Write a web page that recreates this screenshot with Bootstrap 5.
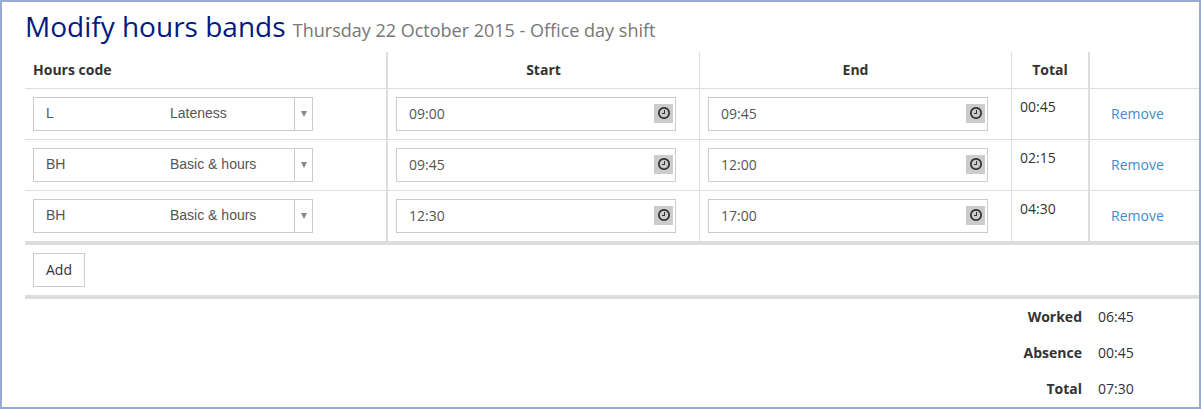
<!DOCTYPE html>
<html lang="en">
<head>
<meta charset="utf-8">
<meta name="viewport" content="width=device-width, initial-scale=1">
<title>Modify hours bands</title>
<link href="https://cdn.jsdelivr.net/npm/bootstrap@5.3.0/dist/css/bootstrap.min.css" rel="stylesheet">
<style>
  body { font-family: "Open Sans", sans-serif; font-size: 14px; line-height: 20px; color: #333; }
  .frame { border: 2px solid #9aa9cf; padding: 8px 0 0 23px; }
  h1 { font-size: 28px; line-height: 32px; font-weight: 400; color: #001a80; margin-bottom: 10px; }
  h1 small { font-size: 18px; line-height: 18px; color: #777; }
  .bands { border-collapse: separate; border-spacing: 0; table-layout: fixed; width: 100%; min-width: 1174px; }
  .bands th, .bands td { padding: 8px; vertical-align: top; border: 0 solid #ddd; }
  .bands thead > tr > *, .bands tbody > tr > * { border-bottom-width: 1px; }
  .bands .line { border-right-width: 1px; }
  .bands .line-thick { border-right-width: 2px; }
  .bands tbody > tr:last-child > *, .bands .add-row > * { border-bottom-width: 4px; }
  .col-code { width: 363px; }
  .col-time { width: 312px; }
  .col-total { width: 78px; }
  .field { width: 280px; }
  .field .form-control, .field .form-select {
    height: 34px; padding: 5px 12px 7px; font-size: 14px; line-height: 20px;
    border: 1px solid #ccc; border-radius: 0; color: #555; background: #fff;
  }
  .field .form-select { font-family: "Liberation Sans", sans-serif; padding: 5px 20px 7px 136px; }
  .code { left: 13px; top: 6px; font-family: "Liberation Sans", sans-serif; color: #555; pointer-events: none; }
  .arrow { right: 0; top: 0; width: 19px; height: 34px; border: 1px solid #ccc; pointer-events: none; }
  .clock { right: 3px; top: 7px; width: 19px; height: 19px; padding: 0 0 2px; border: 0; background: #ccc; color: #333; }
  .btn { --bs-btn-font-size: 14px; --bs-btn-line-height: 20px; --bs-btn-border-radius: 0; }
  .btn-plain { --bs-btn-color: #333; --bs-btn-border-color: #ccc; --bs-btn-hover-bg: #eee; }
  .btn-remove { --bs-btn-color: #428bca; --bs-btn-hover-color: #2a6496; }
</style>
</head>
<body>
<svg class="d-none" aria-hidden="true">
  <symbol id="clock" viewBox="0 128 1536 1536"><path fill="currentColor" d="M896 544v448q0 14-9 23t-23 9h-320q-14 0-23-9t-9-23v-64q0-14 9-23t23-9h224v-352q0-14 9-23t23-9h64q14 0 23 9t9 23zm416 352q0-148-73-273t-198-198-273-73-273 73-198 198-73 273 73 273 198 198 273 73 273-73 198-198 73-273zm224 0q0 209-103 385.5t-279.5 279.5-385.5 103-385.5-103-279.5-279.5-103-385.5 103-385.5 279.5-279.5 385.5-103 385.5 103 279.5 279.5 103 385.5z"/></symbol>
  <symbol id="down" viewBox="0 0 6 6"><path fill="#888" d="M0 0h6L3 6z"/></symbol>
</svg>
<main class="frame min-vh-100">
  <h1>Modify hours bands <small>Thursday 22 October 2015 - Office day shift</small></h1>
  <table class="bands">
    <colgroup><col class="col-code"><col class="col-time"><col class="col-time"><col class="col-total"><col></colgroup>
    <thead>
      <tr>
        <th scope="col" class="line-thick">Hours code</th>
        <th scope="col" class="line text-center">Start</th>
        <th scope="col" class="line text-center">End</th>
        <th scope="col" class="line-thick text-center">Total</th>
        <td></td>
      </tr>
    </thead>
    <tbody>
      <tr>
        <td class="line-thick"><div class="field position-relative">
          <select class="form-select" aria-label="Hours code, band 1"><option>Lateness</option><option>Basic &amp; hours</option></select>
          <span class="code position-absolute">L</span>
          <span class="arrow position-absolute d-flex align-items-center justify-content-center"><svg width="6" height="6"><use href="#down"/></svg></span>
        </div></td>
        <td class="line"><div class="field position-relative">
          <input type="text" class="form-control" value="09:00" aria-label="Start, band 1">
          <button type="button" class="clock position-absolute d-flex align-items-center justify-content-center" aria-label="Pick start time"><svg width="12" height="12"><use href="#clock"/></svg></button>
        </div></td>
        <td class="line"><div class="field position-relative">
          <input type="text" class="form-control" value="09:45" aria-label="End, band 1">
          <button type="button" class="clock position-absolute d-flex align-items-center justify-content-center" aria-label="Pick end time"><svg width="12" height="12"><use href="#clock"/></svg></button>
        </div></td>
        <td class="line-thick">00:45</td>
        <td><a href="#" class="btn btn-remove">Remove</a></td>
      </tr>
      <tr>
        <td class="line-thick"><div class="field position-relative">
          <select class="form-select" aria-label="Hours code, band 2"><option>Basic &amp; hours</option><option>Lateness</option></select>
          <span class="code position-absolute">BH</span>
          <span class="arrow position-absolute d-flex align-items-center justify-content-center"><svg width="6" height="6"><use href="#down"/></svg></span>
        </div></td>
        <td class="line"><div class="field position-relative">
          <input type="text" class="form-control" value="09:45" aria-label="Start, band 2">
          <button type="button" class="clock position-absolute d-flex align-items-center justify-content-center" aria-label="Pick start time"><svg width="12" height="12"><use href="#clock"/></svg></button>
        </div></td>
        <td class="line"><div class="field position-relative">
          <input type="text" class="form-control" value="12:00" aria-label="End, band 2">
          <button type="button" class="clock position-absolute d-flex align-items-center justify-content-center" aria-label="Pick end time"><svg width="12" height="12"><use href="#clock"/></svg></button>
        </div></td>
        <td class="line-thick">02:15</td>
        <td><a href="#" class="btn btn-remove">Remove</a></td>
      </tr>
      <tr>
        <td class="line-thick"><div class="field position-relative">
          <select class="form-select" aria-label="Hours code, band 3"><option>Basic &amp; hours</option><option>Lateness</option></select>
          <span class="code position-absolute">BH</span>
          <span class="arrow position-absolute d-flex align-items-center justify-content-center"><svg width="6" height="6"><use href="#down"/></svg></span>
        </div></td>
        <td class="line"><div class="field position-relative">
          <input type="text" class="form-control" value="12:30" aria-label="Start, band 3">
          <button type="button" class="clock position-absolute d-flex align-items-center justify-content-center" aria-label="Pick start time"><svg width="12" height="12"><use href="#clock"/></svg></button>
        </div></td>
        <td class="line"><div class="field position-relative">
          <input type="text" class="form-control" value="17:00" aria-label="End, band 3">
          <button type="button" class="clock position-absolute d-flex align-items-center justify-content-center" aria-label="Pick end time"><svg width="12" height="12"><use href="#clock"/></svg></button>
        </div></td>
        <td class="line-thick">04:30</td>
        <td><a href="#" class="btn btn-remove">Remove</a></td>
      </tr>
    </tbody>
    <tfoot>
      <tr class="add-row"><td colspan="5"><button type="button" class="btn btn-plain d-block">Add</button></td></tr>
      <tr><th scope="row" colspan="4" class="text-end">Worked</th><td>06:45</td></tr>
      <tr><th scope="row" colspan="4" class="text-end">Absence</th><td>00:45</td></tr>
      <tr><th scope="row" colspan="4" class="text-end">Total</th><td>07:30</td></tr>
    </tfoot>
  </table>
</main>
<script src="https://cdn.jsdelivr.net/npm/bootstrap@5.3.0/dist/js/bootstrap.bundle.min.js"></script>
</body>
</html>
